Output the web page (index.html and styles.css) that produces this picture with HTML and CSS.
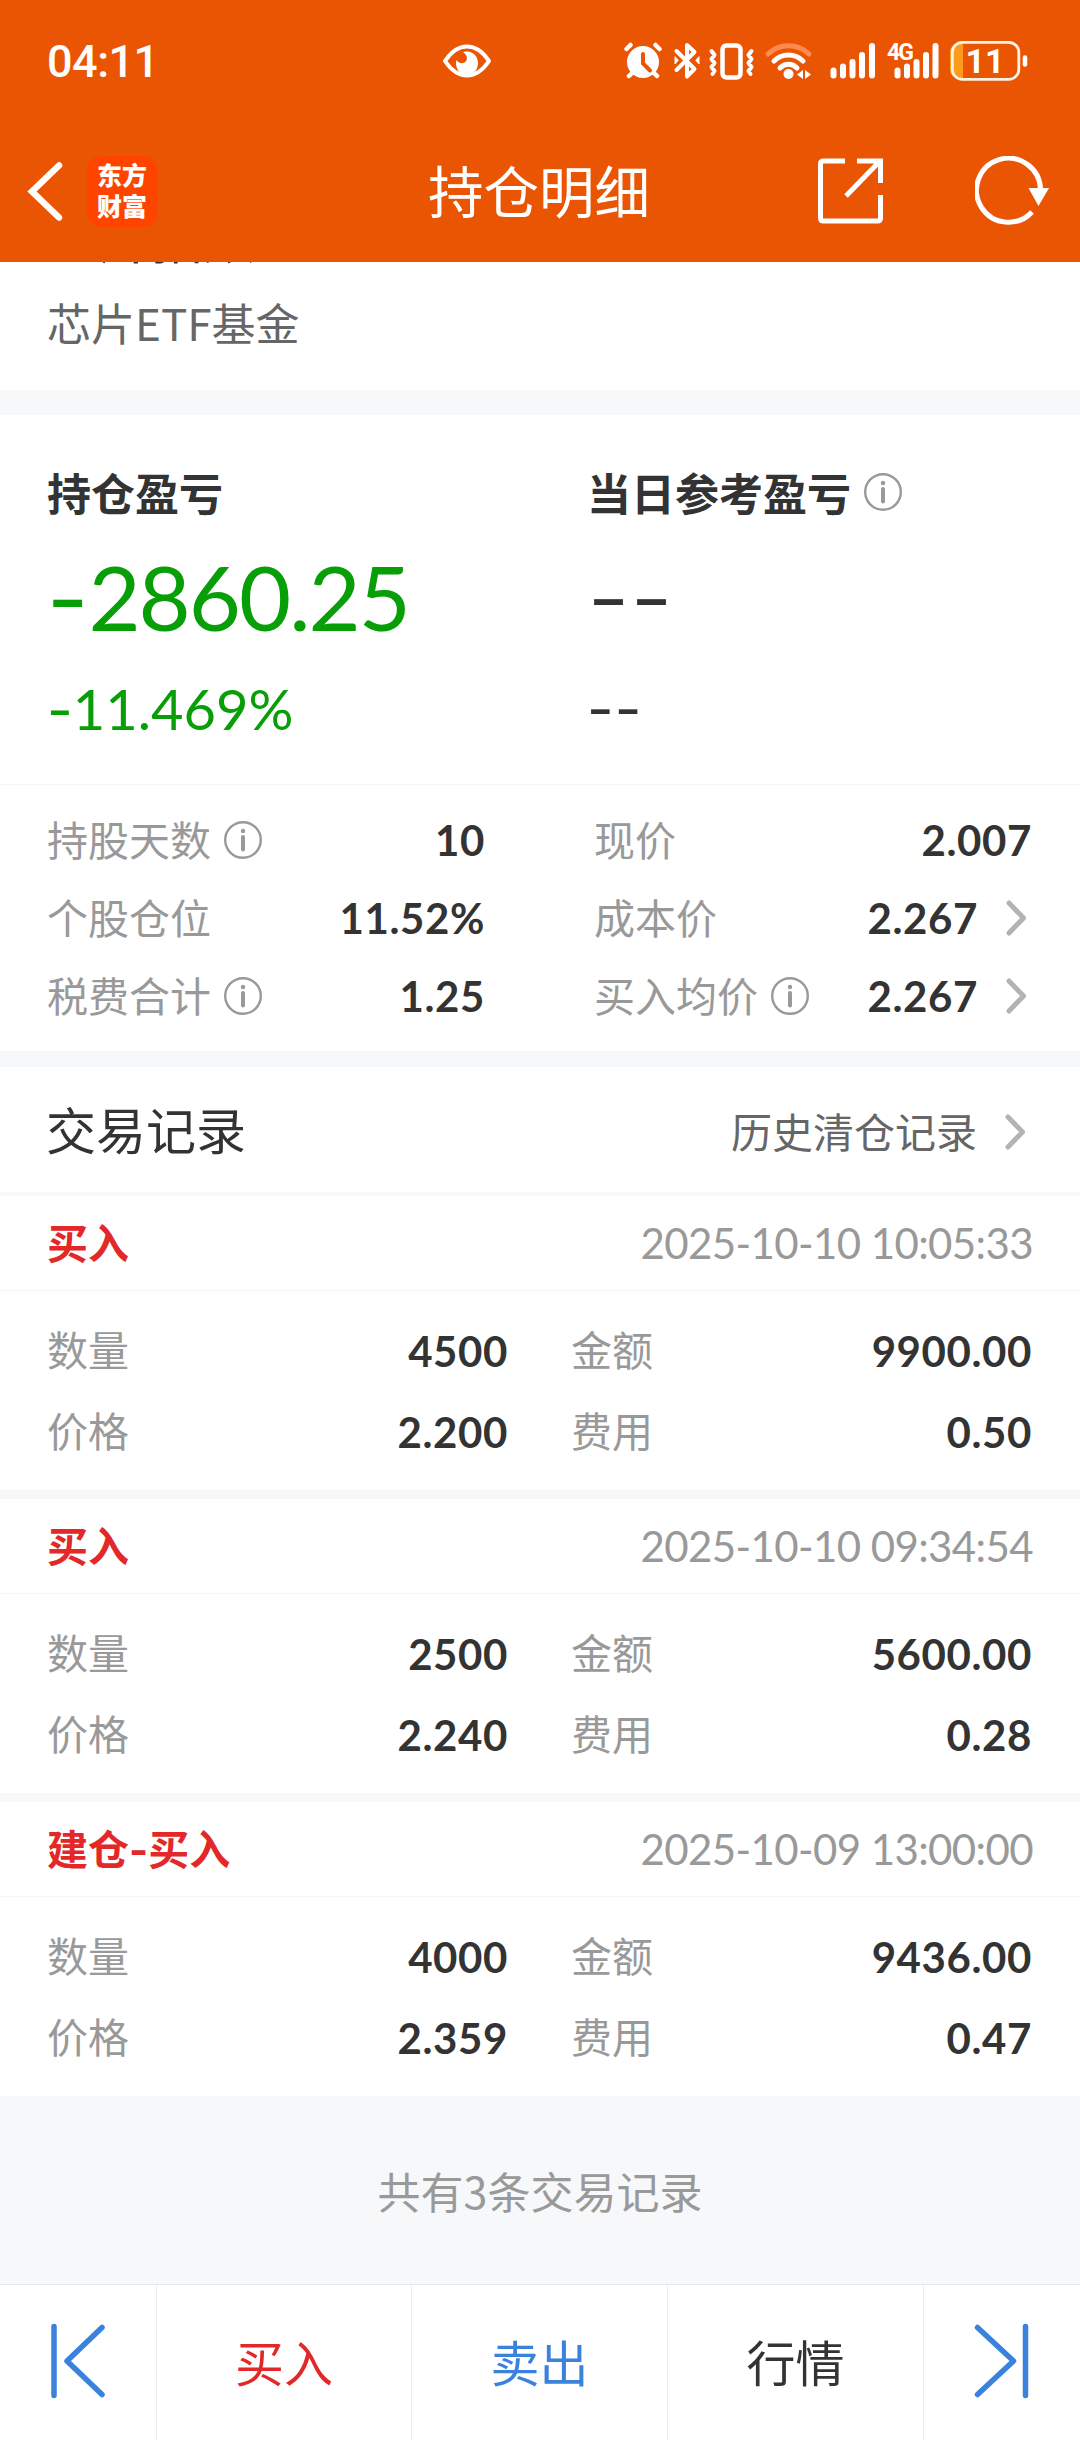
FILE: index.html
```html
<!DOCTYPE html>
<html lang="zh-CN">
<head>
  <meta charset="UTF-8">
  <title>持仓明细</title>
  <link rel="stylesheet" href="styles.css">
</head>
<body>
  <!-- shared icons -->
  <svg class="defs" width="0" height="0">
    <symbol id="info" viewBox="0 0 38 38">
      <circle cx="19" cy="19" r="17.8" fill="none" stroke="#999" stroke-width="2.4"/>
      <circle cx="19" cy="10" r="2.2" fill="#999"/>
      <path d="M19 16v12.500" stroke="#999" stroke-width="4" stroke-linecap="round"/>
    </symbol>
    <symbol id="arrow" viewBox="0 0 26 36">
      <path d="M3 3l14.500 15L3 33" fill="none" stroke="#b3b3b3" stroke-width="5" stroke-linecap="round" stroke-linejoin="round"/>
    </symbol>
  </svg>

  <header>
    <div class="status">
      <span class="clock">04:11</span>
      <svg class="eye" width="48" height="34" viewBox="0 0 48 34">
        <path d="M2 17C8 8 15 2.500 24 2.500S40 8 46 17C40 26 33 31.500 24 31.500S8 26 2 17z" fill="none" stroke="#fff" stroke-width="4" stroke-linejoin="round"/>
        <path d="M21 8c8-2 14 4 14 11 0 6-4 12-11 12s-11-6-11-12c0-1 0-2 .5-3 1.500 3 5 4 8 2.500s4-7-1.500-10.500z" fill="#fff"/>
      </svg>
      <svg class="sysicons" width="408" height="42" viewBox="0 0 408 42">
        <!-- alarm -->
        <g fill="none" stroke="#fff" stroke-linecap="round">
          <circle cx="19" cy="22" r="16" fill="#fff" stroke="none"/>
          <path d="M2.500 9l4-4M35.500 9l-4-4M5 36l5-5M33 36l-5-5" stroke-width="4.500"/>
          <path d="M19 14v9.500l7 7" stroke="#ea5504" stroke-width="4"/>
        </g>
        <!-- bluetooth -->
        <g fill="none" stroke="#fff" stroke-width="4" stroke-linejoin="round" stroke-linecap="round">
          <path d="M52.500 11l18 18-7.500 7.500V5l7.500 7-18 18"/>
          <path d="M51 17v7l3-3.500zM75 17v7l-3-3.500z" fill="#fff" stroke-width="1"/>
        </g>
        <!-- vibrate -->
        <g fill="none" stroke="#fff" stroke-width="4.500" stroke-linejoin="round" stroke-linecap="round">
          <rect x="98.500" y="5.500" width="18" height="32" rx="4"/>
          <path d="M87.500 11l3 4-3 4 3 4-3 4 3 4-2 3M127.500 11l-3 4 3 4-3 4 3 4-3 4 2 3" stroke-width="4"/>
        </g>
        <!-- wifi -->
        <g fill="none" stroke="#fff" stroke-width="5" stroke-linecap="round">
          <path d="M144 14c11-11 30-11 41 0" stroke="#ff8a50"/>
          <path d="M150 21c8-8 21-8 29 0M156 28c5-5 12-5 17 0"/>
          <circle cx="164.500" cy="34" r="5" fill="#fff" stroke="none"/>
          <path d="M179 30v9l-6-4.500zM181 30v9l6-4.500z" fill="#fff" stroke="none"/>
        </g>
        <!-- signal bars -->
        <g stroke="#fff" stroke-width="6" stroke-linecap="round">
          <path d="M209.500 30.500v5M219 26.500v9M228.500 22v13.500M238 15v20.500M248 6v29.500"/>
          <path d="M273.500 30.500v5M283 26.500v9M292.500 22v13.500M302 15v20.500M311.500 6v29.500"/>
        </g>
        <text x="263" y="20" class="net">4G</text>
        <!-- battery -->
        <path d="M339 4h-5a8 8 0 0 0-8 8v18a8 8 0 0 0 8 8h5z" fill="#ff9b1a"/>
        <rect x="328.300" y="2.300" width="66.500" height="37" rx="10" fill="none" stroke="#fff3e6" stroke-width="2.800"/>
        <path d="M401 17.500v7" stroke="#fff" stroke-width="4.500" stroke-linecap="round"/>
        <text x="361" y="32.500" class="batt" text-anchor="middle">11</text>
      </svg>
    </div>
    <div class="navbar">
      <svg class="back" width="36" height="60" viewBox="0 0 36 60">
        <path d="M32 4.500L5 30.500l27 26" fill="none" stroke="#fff" stroke-width="6.500" stroke-linecap="round"/>
      </svg>
      <div class="logo">东方<br>财富</div>
      <h1>持仓明细</h1>
      <svg class="share" width="66" height="66" viewBox="0 0 66 66">
        <path d="M27 3H5.500Q2.500 3 2.500 6V60Q2.500 63 5.500 63H59.500Q62.500 63 62.500 60V37M39 3H62.500V25M61 4L28 38" fill="none" stroke="#fff" stroke-width="5"/>
      </svg>
      <svg class="refresh" width="76" height="70" viewBox="0 0 76 70">
        <path d="M57 56A32 32 0 1 1 65.500 33" fill="none" stroke="#fff" stroke-width="5"/>
        <path d="M53.500 32h20.500l-10.500 18z" fill="#fff"/>
      </svg>
    </div>
  </header>

  <section class="fund">
    <div class="index-name">芯片指数</div>
    <div class="fund-name">芯片ETF基金</div>
  </section>

  <!-- profit / loss -->
  <section class="profit">
    <div class="col">
      <h2>持仓盈亏</h2>
      <div class="big green num"><span class="minus">-</span>2860.25</div>
      <div class="pct green num"><span class="minus">-</span>11.469%</div>
    </div>
    <div class="col">
      <h2>当日参考盈亏 <svg class="info"><use href="#info"/></svg></h2>
      <div class="big dash">--</div>
      <div class="pct dash">--</div>
    </div>
  </section>

  <section class="stats">
    <div class="row"><label>持股天数</label><svg class="info"><use href="#info"/></svg><b>10</b></div>
    <div class="row"><label>现价</label><b>2.007</b></div>
    <div class="row"><label>个股仓位</label><b>11.52%</b></div>
    <div class="row"><label>成本价</label><b>2.267</b><svg class="arrow"><use href="#arrow"/></svg></div>
    <div class="row"><label>税费合计</label><svg class="info"><use href="#info"/></svg><b>1.25</b></div>
    <div class="row"><label>买入均价</label><svg class="info"><use href="#info"/></svg><b>2.267</b><svg class="arrow"><use href="#arrow"/></svg></div>
  </section>

  <!-- trade records -->
  <section class="records-head">
    <h3>交易记录</h3>
    <a>历史清仓记录</a>
    <svg class="arrow"><use href="#arrow"/></svg>
  </section>

  <section class="record">
    <div class="record-title"><strong>买入</strong><time>2025-10-10 10:05:33</time></div>
    <div class="record-body">
      <div class="row"><label>数量</label><b>4500</b></div>
      <div class="row"><label>金额</label><b>9900.00</b></div>
      <div class="row"><label>价格</label><b>2.200</b></div>
      <div class="row"><label>费用</label><b>0.50</b></div>
    </div>
  </section>

  <section class="record">
    <div class="record-title"><strong>买入</strong><time>2025-10-10 09:34:54</time></div>
    <div class="record-body">
      <div class="row"><label>数量</label><b>2500</b></div>
      <div class="row"><label>金额</label><b>5600.00</b></div>
      <div class="row"><label>价格</label><b>2.240</b></div>
      <div class="row"><label>费用</label><b>0.28</b></div>
    </div>
  </section>

  <section class="record">
    <div class="record-title"><strong>建仓<span class="minus">-</span>买入</strong><time>2025-10-09 13:00:00</time></div>
    <div class="record-body">
      <div class="row"><label>数量</label><b>4000</b></div>
      <div class="row"><label>金额</label><b>9436.00</b></div>
      <div class="row"><label>价格</label><b>2.359</b></div>
      <div class="row"><label>费用</label><b>0.47</b></div>
    </div>
  </section>

  <div class="total">共有3条交易记录</div>

  <nav>
    <a class="side"><svg width="56" height="76" viewBox="0 0 56 76">
      <path d="M4 3.500v69M52 4.500L17 38 52 71.500" fill="none" stroke="#3a82dc" stroke-width="5.500" stroke-linecap="round" stroke-linejoin="round"/>
    </svg></a>
    <a class="buy">买入</a>
    <a class="sell">卖出</a>
    <a class="quote">行情</a>
    <a class="side"><svg width="56" height="76" viewBox="0 0 56 76">
      <path d="M51.500 3.500v69M3.500 4.500l36 33.500-36 33.500" fill="none" stroke="#3a82dc" stroke-width="5.500" stroke-linecap="round" stroke-linejoin="round"/>
    </svg></a>
  </nav>
</body>
</html>
```
FILE: styles.css
```css
* {
  box-sizing: border-box;
}
body {
  margin: 0;
  width: 1080px;
  height: 2440px;
  overflow: hidden;
  background-color: #f6f8fa;
  color: #333;
  font-family: "Noto Sans CJK SC", sans-serif;
}
h1, h2, h3 {
  margin: 0;
}
section {
  background-color: #fff;
}
.defs {
  position: absolute;
}

/* Header */
header {
  height: 262px;
  background-color: #ea5504;
  color: #fff;
}
.status {
  display: flex;
  align-items: center;
  height: 122px;
  padding-left: 47px;
}
.clock {
  width: 396px;
  font-family: Roboto, sans-serif;
  font-size: 45px;
  font-weight: 500;
  letter-spacing: -0.5px;
}
.sysicons {
  margin-left: 133px;
}
.net {
  fill: #fff;
  font: bold 23px Roboto, sans-serif;
  letter-spacing: -2px;
}
.batt {
  fill: #fff;
  font: bold 34px Roboto, sans-serif;
}
.navbar {
  display: flex;
  align-items: center;
  height: 138px;
  padding-left: 27px;
}
.logo {
  width: 70px;
  height: 71px;
  margin-left: 24px;
  padding-top: 3px;
  border-radius: 14px;
  background-color: #ff4400;
  font-size: 25px;
  font-weight: 900;
  line-height: 31px;
  text-align: center;
}
h1 {
  width: 222px;
  margin-left: 271px;
  padding-bottom: 4px;
  font-size: 55.5px;
  font-weight: 400;
  line-height: 70px;
  white-space: nowrap;
}
.share {
  margin-left: 168px;
}
.refresh {
  margin-left: 91px;
}

/* Fund name, the index name is scrolled up under the header */
.fund {
  height: 128px;
  padding-left: 47px;
  overflow: hidden;
}
.index-name {
  margin-top: -55px;
  font-size: 52px;
  line-height: 60px;
}
.fund-name {
  padding-top: 22px;
  color: #666;
  font-size: 44px;
  line-height: 66px;
}

/* Profit */
.profit {
  display: flex;
  height: 370px;
  margin-top: 25px;
  padding-top: 42px;
  border-bottom: 1px solid #f3f5f7;
}
.col {
  width: 540px;
  padding-left: 47px;
}
h2 {
  display: flex;
  align-items: center;
  height: 70px;
  font-size: 44px;
  line-height: 64px;
}
h2 .info {
  margin-left: 13px;
}
.info {
  width: 38px;
  height: 38px;
}
.num {
  font-family: Lato, sans-serif;
}
.minus,
.dash {
  font-family: Inter, sans-serif;
}
.big {
  height: 142px;
  font-size: 90px;
  line-height: 138px;
  letter-spacing: -2px;
}
.big .minus {
  letter-spacing: 0;
}
.pct {
  height: 81px;
  font-size: 56px;
  line-height: 79px;
}
.big.dash {
  font-size: 95px;
  font-weight: 300;
  line-height: 142px;
  letter-spacing: 0;
}
.pct.dash {
  font-size: 58px;
  line-height: 81px;
  letter-spacing: 1px;
}
.green {
  color: #089e08;
}

/* Stats */
.stats {
  display: grid;
  grid-template-columns: 438px 438px;
  column-gap: 109px;
  align-content: start;
  height: 266px;
  padding: 16px 0 0 47px;
}
.row {
  display: flex;
  align-items: center;
  height: 78px;
  font-size: 41px;
}
.row label {
  padding-bottom: 5px;
  color: #999;
}
.row .info {
  margin-left: 13px;
}
.row b {
  margin-left: auto;
  font-family: Lato, sans-serif;
  font-size: 42px;
  letter-spacing: 0.6px;
}
.arrow {
  width: 26px;
  height: 36px;
  margin-left: 28px;
}

/* Records */
.records-head {
  display: flex;
  align-items: center;
  height: 125px;
  margin-top: 16px;
  padding: 0 49px 0 46px;
}
h3 {
  margin-right: auto;
  padding-bottom: 4px;
  font-size: 50px;
  font-weight: 400;
}
.records-head a {
  color: #666;
  font-size: 41px;
}
.records-head .arrow {
  margin-top: 4px;
}
.record {
  height: 294px;
  margin-bottom: 9px;
}
.records-head + .record {
  margin-top: 4px;
}
.record-title {
  display: flex;
  align-items: center;
  justify-content: space-between;
  height: 95px;
  padding: 0 47px;
  border-bottom: 1px solid #f3f5f7;
}
.record-title strong {
  padding-bottom: 4px;
  color: #e22828;
  font-size: 41px;
}
.record-title time {
  color: #999;
  font-family: Lato, sans-serif;
  font-size: 42px;
  letter-spacing: -0.6px;
}
.record-body {
  display: grid;
  grid-template-columns: 461px 461px;
  column-gap: 63px;
  padding: 19px 0 0 47px;
}
.record-body .row {
  height: 81px;
}
.total {
  height: 179px;
  color: #999;
  font-size: 43px;
  line-height: 171px;
  text-align: center;
}

/* Bottom bar */
nav {
  display: grid;
  grid-template-columns: 157px 255px 256px 256px 156px;
  height: 156px;
  border-top: 1px solid #e8e8e8;
  background-color: #fff;
}
nav a {
  display: flex;
  align-items: center;
  justify-content: center;
  padding-bottom: 4px;
  border-right: 1px solid #ececec;
  font-size: 49px;
}
nav a:last-child {
  border-right: none;
}
.buy {
  color: #e22828;
}
.sell {
  color: #3a82dc;
}
```
